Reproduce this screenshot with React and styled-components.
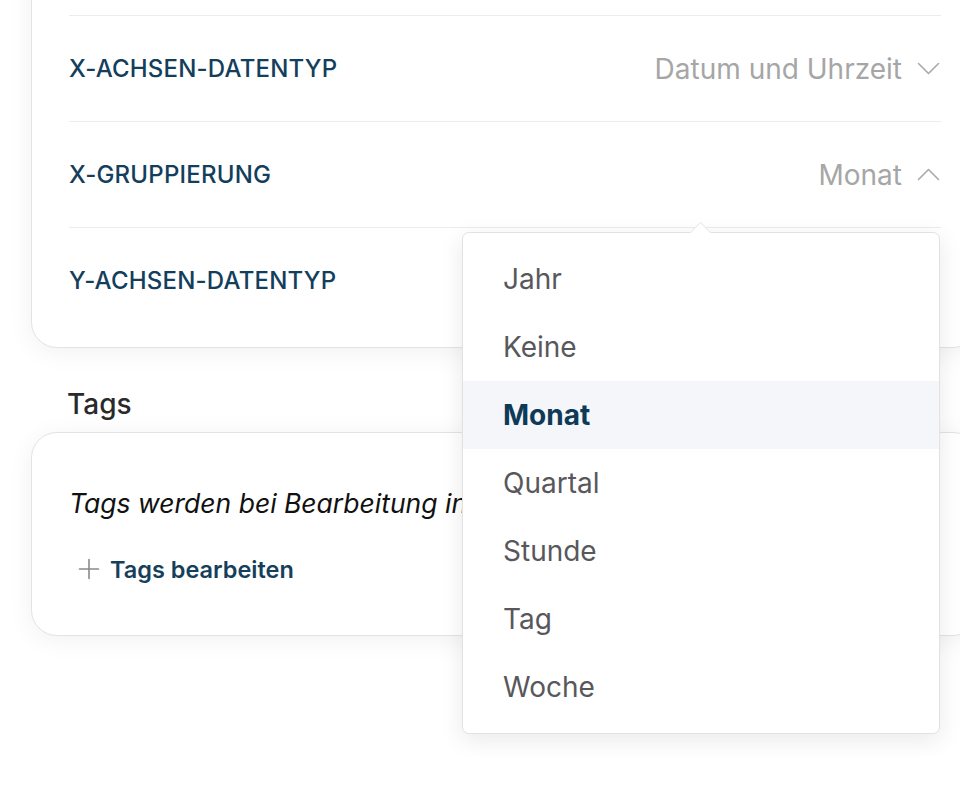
import React from "react";
import styled, { createGlobalStyle } from "styled-components";

const GlobalStyle = createGlobalStyle`
    html, body {
        margin: 0;
        padding: 0;
        background: #ffffff;
        overflow: hidden;
    }
    body {
        font-family: Inter, "Noto Sans", "Liberation Sans", sans-serif;
        -webkit-font-smoothing: antialiased;
    }
`;

const Page = styled.div`
    width: 948px;
    margin-top: -91px;
    padding-left: 31px;
    padding-bottom: 120px;
`;

const Card = styled.section`
    background: #ffffff;
    border: 1.5px solid #e3e3e3;
    border-radius: 26px;
    box-shadow: 0 4px 26px rgba(0, 0, 0, 0.06);
    padding: ${(p) => p.$padding};
`;

const Row = styled.div`
    position: relative;
    height: 105px;
    display: flex;
    align-items: center;
    justify-content: space-between;
    border-top: ${(p) => (p.$first ? "none" : "1.5px solid #ececec")};
`;

const Label = styled.span`
    font-size: 24px;
    font-weight: 500;
    letter-spacing: 0.2px;
    color: #133e5c;
`;

const Select = styled.div`
    display: flex;
    align-items: center;
    gap: 15px;
    font-size: 28px;
    color: #a6a6a6;
`;

const Chevron = styled.svg`
    width: 23px;
    height: 13px;
    margin-right: 1px;
`;

const Menu = styled.ul`
    position: absolute;
    top: 110px;
    right: 1px;
    width: 476px;
    margin: 0;
    padding: 12px 0;
    list-style: none;
    background: #ffffff;
    border: 1.5px solid #e2e2e2;
    border-radius: 7px;
    box-shadow: 0 6px 24px rgba(0, 0, 0, 0.09);
    z-index: 10;

    &::before {
        content: "";
        position: absolute;
        top: -8px;
        left: 230px;
        width: 14px;
        height: 14px;
        background: #ffffff;
        border-top: 1.5px solid #e8e8e8;
        border-left: 1.5px solid #e8e8e8;
        transform: rotate(45deg);
    }
`;

const MenuItem = styled.li`
    height: 68px;
    display: flex;
    align-items: center;
    padding-left: 40px;
    font-size: 28px;
    font-weight: ${(p) => (p.$active ? 700 : 400)};
    color: ${(p) => (p.$active ? "#0f3a57" : "#58585c")};
    background: ${(p) => (p.$active ? "#f4f6f9" : "transparent")};
`;

const SectionTitle = styled.h3`
    margin: 40px 0 12px 36px;
    font-size: 28px;
    line-height: 32px;
    font-weight: 500;
    color: #2a2a2a;
`;

const Note = styled.p`
    margin: 0;
    font-size: 26.5px;
    line-height: 32px;
    font-style: italic;
    color: #111111;
    white-space: nowrap;
`;

const AddButton = styled.button`
    display: flex;
    align-items: center;
    gap: 10px;
    margin-top: 30px;
    padding: 0 0 0 9px;
    height: 40px;
    border: none;
    background: none;
    font-family: inherit;
    font-size: 23.5px;
    font-weight: 600;
    color: #163f5c;
    cursor: pointer;
`;

const options = ["Jahr", "Keine", "Monat", "Quartal", "Stunde", "Tag", "Woche"];

function ChevronIcon({ up }) {
    return (
        <Chevron viewBox="0 0 23 13" fill="none" stroke="#a9a9a9" strokeWidth="1.6" strokeLinecap="round" strokeLinejoin="round">
            {up ? <path d="M1.5 11.5 L11.5 1.5 L21.5 11.5" /> : <path d="M1.5 1.5 L11.5 11.5 L21.5 1.5" />}
        </Chevron>
    );
}

function App() {
    return (
        <>
            <GlobalStyle />
            <Page>
                <Card $padding="0 37px 14px 37px">
                    <Row $first>
                        <Label>DIAGRAMMTYP</Label>
                        <Select>
                            Linie
                            <ChevronIcon />
                        </Select>
                    </Row>
                    <Row>
                        <Label>X-ACHSEN-DATENTYP</Label>
                        <Select>
                            Datum und Uhrzeit
                            <ChevronIcon />
                        </Select>
                    </Row>
                    <Row>
                        <Label>X-GRUPPIERUNG</Label>
                        <Select>
                            Monat
                            <ChevronIcon up />
                        </Select>
                        <Menu>
                            {options.map((o) => (
                                <MenuItem key={o} $active={o === "Monat"}>
                                    {o}
                                </MenuItem>
                            ))}
                        </Menu>
                    </Row>
                    <Row>
                        <Label>Y-ACHSEN-DATENTYP</Label>
                        <Select>
                            Zahl
                            <ChevronIcon />
                        </Select>
                    </Row>
                </Card>

                <SectionTitle>Tags</SectionTitle>
                <Card $padding="54px 37px 46px 37px">
                    <Note>Tags werden bei Bearbeitung in allen Sprachen übernommen.</Note>
                    <AddButton>
                        <svg width="22" height="22" viewBox="0 0 22 22" fill="none" stroke="#8a8a8a" strokeWidth="1.6" strokeLinecap="round">
                            <path d="M11 1.5 V20.5 M1.5 11 H20.5" />
                        </svg>
                        Tags bearbeiten
                    </AddButton>
                </Card>
            </Page>
        </>
    );
}

export default App;
